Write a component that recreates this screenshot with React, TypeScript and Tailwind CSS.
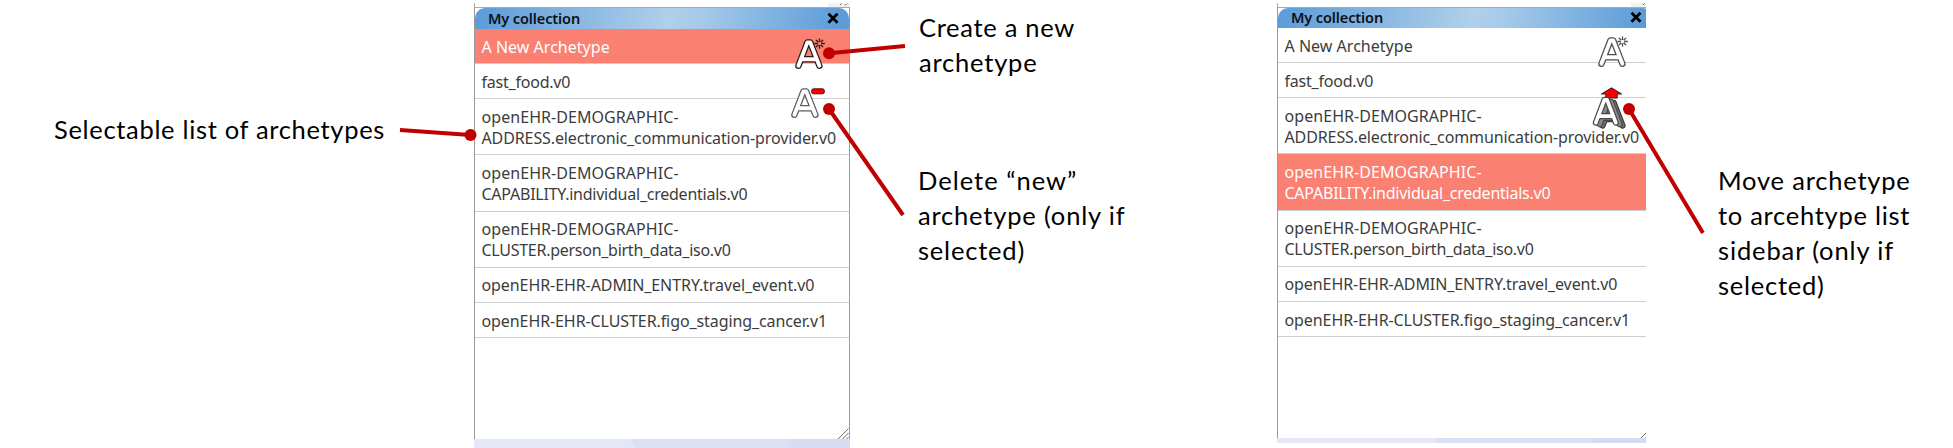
import React from "react";

type Line = { text: string; track: string };
type Row = { id: string; lines: Line[] };

const rows: Row[] = [
  { id: "new", lines: [{ text: "A New Archetype", track: "tracking-[0.02px]" }] },
  { id: "food", lines: [{ text: "fast_food.v0", track: "tracking-[-0.22px]" }] },
  {
    id: "address",
    lines: [
      { text: "openEHR-DEMOGRAPHIC-", track: "tracking-[0.06px]" },
      { text: "ADDRESS.electronic_communication-provider.v0", track: "tracking-[-0.11px]" },
    ],
  },
  {
    id: "capability",
    lines: [
      { text: "openEHR-DEMOGRAPHIC-", track: "tracking-[0.06px]" },
      { text: "CAPABILITY.individual_credentials.v0", track: "tracking-[-0.24px]" },
    ],
  },
  {
    id: "birth",
    lines: [
      { text: "openEHR-DEMOGRAPHIC-", track: "tracking-[0.06px]" },
      { text: "CLUSTER.person_birth_data_iso.v0", track: "tracking-[-0.27px]" },
    ],
  },
  { id: "travel", lines: [{ text: "openEHR-EHR-ADMIN_ENTRY.travel_event.v0", track: "tracking-[-0.08px]" }] },
  { id: "figo", lines: [{ text: "openEHR-EHR-CLUSTER.figo_staging_cancer.v1", track: "tracking-[-0.09px]" }] },
];

const LETTER = "M3.4 26.8 L12.4 3.4 H15.2 L24.4 26.8 M7.4 20.2 H20.4";

function OutlinedA({ edge, fill = "#fff" }: { edge: string; fill?: string }) {
  return (
    <g fill="none" strokeLinecap="round" strokeLinejoin="round">
      <path d={LETTER} stroke={edge} strokeWidth="6.4" />
      <path d={LETTER} stroke={fill} strokeWidth="3.9" />
    </g>
  );
}

function NewIcon({ className, edge }: { className: string; edge: string }) {
  return (
    <svg className={className} width="34" height="32" viewBox="0 0 34 32">
      <OutlinedA edge={edge} />
      <path
        d="M24.5 -0.5 V3 M24.5 6 V9.8 M19.4 4.5 H22.8 M26.2 4.5 H29.8 M20.9 0.9 L23.3 3.3 M25.7 5.7 L28.1 8.1 M28.1 0.9 L25.7 3.3 M23.3 5.7 L20.9 8.1"
        stroke={edge}
        strokeWidth="1.3"
        fill="none"
      />
    </svg>
  );
}

function DeleteIcon({ className }: { className: string }) {
  return (
    <svg className={className} width="36" height="32" viewBox="0 0 36 32">
      <OutlinedA edge="#5c5c5c" />
      <rect x="20.6" y="0.8" width="12.8" height="5" rx="2" fill="#f50000" stroke="#5a1010" strokeWidth="1" />
    </svg>
  );
}

function MoveIcon({ className }: { className: string }) {
  return (
    <svg className={className} width="38" height="46" viewBox="0 0 38 46">
      <path d="M19.5 0.8 L29.6 7 H25.2 V11 H13.8 V7 H9.4 Z" fill="#f50000" stroke="#4a1414" strokeWidth="1" />
      <g transform="translate(7.4 12.6) scale(.95 .97)">
        <OutlinedA edge="#3c3c3c" fill="#6e6e6e" />
      </g>
      <g transform="translate(4.4 11.2) scale(.95 .97)">
        <OutlinedA edge="#4a4a4a" fill="#8a8a8a" />
      </g>
      <g transform="translate(0.6 9.6) scale(.95 .97)">
        <OutlinedA edge="#4a4a4a" />
      </g>
    </svg>
  );
}

function Grip() {
  return (
    <svg className="absolute right-0 bottom-0" width="12" height="11" viewBox="0 0 12 11">
      <path d="M1 11 L11.5 0.5 M5.5 11 L11.5 5 M9.5 11 L11.5 9" stroke="#6b6b6b" strokeWidth="1" fill="none" />
    </svg>
  );
}

function Panel({ selected, clipped, children }: { selected: string; clipped?: boolean; children: React.ReactNode }) {
  return (
    <section
      className={
        clipped
          ? "relative mt-[3px] h-[440px] w-[369px] shrink-0 overflow-hidden"
          : "relative mt-[3px] h-[445px] w-[376px] shrink-0 overflow-hidden"
      }
    >
      <div className={clipped ? "flex h-[440px] w-[376px] flex-col" : "flex h-[445px] w-[376px] flex-col"}>
        <div className="flex h-[5px] shrink-0 justify-end border-b border-l border-[#a9a9a9] bg-white">
          <svg width="22" height="4" viewBox="0 0 22 4">
            <rect width="22" height="4" fill="#f1f1f1" />
            <path d="M12 2 L13.5 0.5 M17 2.5 L19 0.5" stroke="#555" />
          </svg>
        </div>
        <div className="flex grow flex-col border-x border-[#9c9c9c]">
          <header
            className={
              clipped
                ? "flex h-5 shrink-0 items-center justify-between rounded-t-[10px] bg-[linear-gradient(100deg,#5b9bd8_0%,#b0d0ea_52%,#a6caea_60%,#5b9bd8_98%)] pr-[6px] pb-[2px] pl-[13px]"
                : "flex h-[21px] shrink-0 items-center justify-between rounded-t-[10px] bg-[linear-gradient(100deg,#5b9bd8_0%,#b0d0ea_52%,#a6caea_60%,#5b9bd8_98%)] pr-[10px] pb-[2px] pl-[13px]"
            }
          >
            <h2 className="text-[14.5px] leading-5 font-semibold tracking-[-0.12px] whitespace-nowrap text-[#0c1016]">My collection</h2>
            <svg className={clipped ? "mr-1" : ""} width="12" height="12" viewBox="0 0 12 12">
              <path d="M1.5 1.8 L10.5 10.8 M10.5 1.8 L1.5 10.8" stroke="#000" strokeWidth="2.8" />
            </svg>
          </header>
          <ul className="flex grow flex-col bg-white">
            {rows.map((row) => (
              <li
                key={row.id}
                className={
                  "flex shrink-0 flex-col justify-center border-b border-[#cfcfcf] pt-[2.6px] pl-[6.5px] text-[16px] leading-[21.2px] " +
                  (row.lines.length > 1 ? "h-[56.2px] " : "h-[35.1px] ") +
                  (row.id === selected ? "bg-[#fa8072] text-white" : "text-[#3c3c3c]")
                }
              >
                {row.lines.map((l) => (
                  <span key={l.text} className={"block whitespace-nowrap " + l.track}>
                    {l.text}
                  </span>
                ))}
              </li>
            ))}
            <li className="relative grow">
              <Grip />
            </li>
          </ul>
        </div>
        <div
          className={
            clipped
              ? "h-[5px] shrink-0 bg-[linear-gradient(65deg,#e5e6f7_42%,#dce0f5_43%,#dce0f5_83%,#d6dbf4_84%)]"
              : "h-[9px] shrink-0 bg-[linear-gradient(65deg,#e5e6f7_42%,#dce0f5_43%,#dce0f5_83%,#d6dbf4_84%)]"
          }
        />
      </div>
      {children}
    </section>
  );
}

function Note({ lines }: { lines: Line[] }) {
  return (
    <p className="font-['Lato',sans-serif] text-[25.5px] leading-[35px] text-black">
      {lines.map((l) => (
        <span key={l.text} className={"block whitespace-nowrap " + l.track}>
          {l.text}
        </span>
      ))}
    </p>
  );
}

export default function App() {
  return (
    <main className="relative flex h-[448px] w-[1953px] overflow-hidden bg-white font-['Noto_Sans',sans-serif]">
      <div className="w-[474px] shrink-0 pt-[112px] pl-[54px]">
        <Note lines={[{ text: "Selectable list of archetypes", track: "tracking-[0.68px]" }]} />
      </div>
      <Panel selected="new">
        <NewIcon className="absolute top-[36px] left-[321px] overflow-visible" edge="#2b1a1a" />
        <DeleteIcon className="absolute top-[85px] left-[317px] overflow-visible" />
      </Panel>
      <div className="flex w-[427px] shrink-0 flex-col gap-[83px] pt-[10px] pl-[69px]">
        <Note
          lines={[
            { text: "Create a new", track: "tracking-[0.7px]" },
            { text: "archetype", track: "tracking-[0.8px]" },
          ]}
        />
        <div className="-ml-px">
          <Note
            lines={[
              { text: "Delete “new”", track: "tracking-[1px]" },
              { text: "archetype (only if", track: "tracking-[0.82px]" },
              { text: "selected)", track: "tracking-[0.8px]" },
            ]}
          />
        </div>
      </div>
      <Panel selected="capability" clipped>
        <NewIcon className="absolute top-[34px] left-[321px] overflow-visible" edge="#4c4c4c" />
        <MoveIcon className="absolute top-[84px] left-[315px] overflow-visible" />
      </Panel>
      <div className="grow pt-[163px] pl-[72px]">
        <Note
          lines={[
            { text: "Move archetype", track: "tracking-[0.8px]" },
            { text: "to arcehtype list", track: "tracking-[0.72px]" },
            { text: "sidebar (only if", track: "tracking-[0.88px]" },
            { text: "selected)", track: "tracking-[0.75px]" },
          ]}
        />
      </div>
      <svg className="pointer-events-none absolute inset-0" width="1953" height="448" viewBox="0 0 1953 448">
        <g stroke="#c00000" strokeWidth="4" fill="#c00000">
          <path d="M400 130 L470.5 135 M905 46 L829 53.3 M903 215 L829 109 M1703 233 L1629 109" />
          <g stroke="none">
            <circle cx="470.5" cy="135" r="6" />
            <circle cx="829" cy="53.3" r="6" />
            <circle cx="829" cy="109" r="6" />
            <circle cx="1629" cy="109" r="6" />
          </g>
        </g>
      </svg>
    </main>
  );
}
